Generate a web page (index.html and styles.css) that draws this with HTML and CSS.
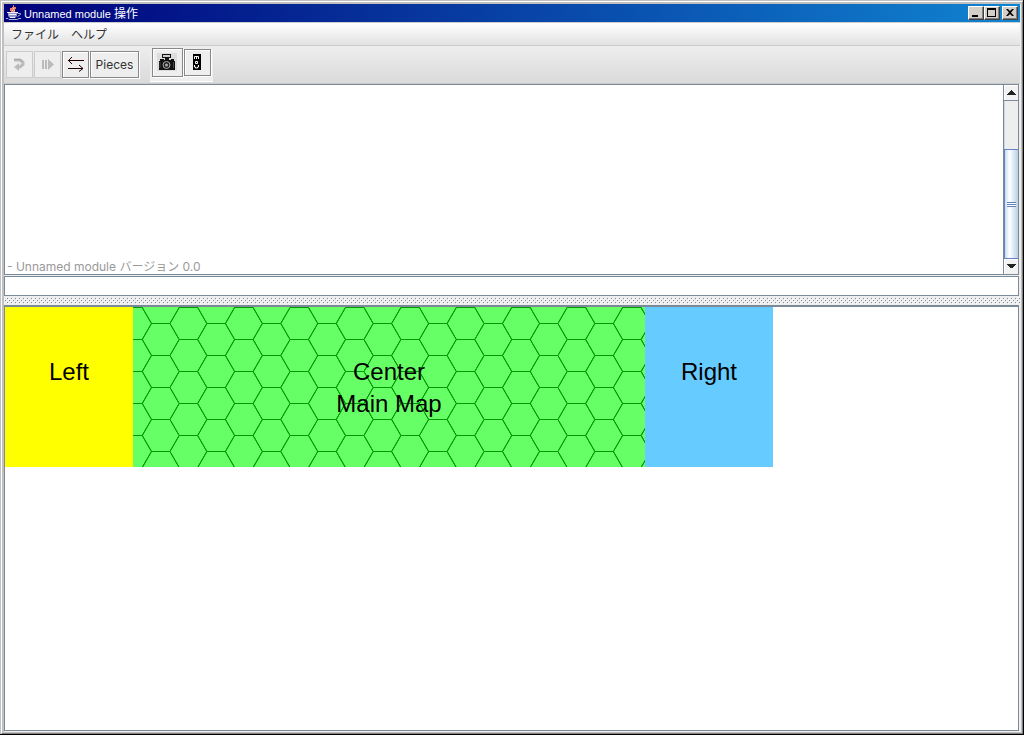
FILE: index.html
```
<!DOCTYPE html>
<html lang="ja">
<head>
<meta charset="utf-8">
<title>Unnamed module 操作</title>
<link rel="stylesheet" href="styles.css">
</head>
<body>
<div class="window">
  <header class="titlebar">
    <svg class="app-icon" width="16" height="16" viewBox="0 0 16 16" aria-hidden="true">
      <path d="M7 0h1v2h2v2H9v3H5V6H4V3h2V2h1z" fill="#f08060"/>
      <path d="M7 3h1v1H7zM6 5h1v1H6zM8 5h1v1H8z" fill="#ffd8c8"/>
      <path d="M2 7h9v4l-2 2H4l-2-2z" fill="#8f96cc"/>
      <path d="M1 7h11v1H1zM3 9h7v1H3zM4 12h5v1H4z" fill="#eef"/>
      <path d="M11.500 8.500h3v1l-3 2M0 13.500h2l1 1h8l2-1h2" fill="none" stroke="#a8aedc"/>
    </svg>
    <h1 class="title">Unnamed module <span class="jp">操作</span></h1>
    <div class="caption-buttons">
      <button class="caption" aria-label="Minimize"><svg width="14" height="12"><path d="M3 8h6v2H3z"/></svg></button>
      <button class="caption" aria-label="Maximize"><svg width="14" height="12"><path d="M2 1h9v9H2zM3 3v6h7V3z" fill-rule="evenodd"/></svg></button>
      <button class="caption close" aria-label="Close"><svg width="14" height="12"><path d="M3 2h2l2 2 2-2h2L8 5.500 11 9H9L7 7 5 9H3l3-3.500z"/></svg></button>
    </div>
  </header>
  <nav class="menubar">
    <button class="menu">ファイル</button>
    <button class="menu">ヘルプ</button>
  </nav>
  <div class="toolbar">
    <button class="tool off" disabled aria-label="Undo"><svg width="15" height="15" viewBox="0 0 15 15"><path d="M2 3h6l3 2.500v2L8 10H6" fill="none" stroke="#bbb" stroke-width="3"/><path d="M7 6v8l-5-4z" fill="#bbb"/><path d="M2 2.500h6l3 2" fill="none" stroke="#a8a8a8"/></svg></button>
    <button class="tool off" disabled aria-label="Step"><svg width="15" height="15" viewBox="0 0 15 15"><path d="M2 3h2v9H2zM5 3h2v9H5zM8 2l6 5.500L8 13z" fill="#bbb"/></svg></button>
    <button class="tool" aria-label="Connection"><svg width="19" height="17" viewBox="0 0 19 17"><path d="M2 4.500h16M6 1L2.500 4.500 6 8M2 12.500h15M13 9l4 3.500-4 3" fill="none" stroke="#200000"/></svg></button>
    <button class="tool wide">Pieces</button>
    <div class="subbar">
      <button class="tool camera" aria-label="Camera"><svg width="21" height="19" viewBox="0 0 21 19"><path d="M0 0h20v18H0z" fill="#dcdcdc"/><path d="M5 1h9v4H5zM8 4h4v3H8zM3 6h4v1h7V6h3v2h1v9H2V8h1z" fill="#111"/><path d="M6 2h7v2H6z" fill="#ccc"/><circle cx="9.500" cy="12" r="3.500" fill="#222" stroke="#aaa"/><circle cx="9.500" cy="12" r="1.500" fill="#aaa"/><path d="M3 9v6M16.500 9v6" stroke="#444"/></svg></button>
      <button class="tool" aria-label="mov"><svg width="9" height="17" viewBox="0 0 9 17"><path d="M0 0h8v16H0z"/><path d="M1.500 5V2.500h4V5M3.500 2.500V5M2.500 7.500h2v2h-2zM1.500 11v2h1v1h2v-1h1v-2" fill="none" stroke="#fff"/></svg></button>
    </div>
  </div>
  <main class="content">
    <section class="log">
      <div class="log-text">- Unnamed module <span class="jp">バージョン</span> 0.0</div>
      <div class="scrollbar">
        <button class="arrow" aria-label="Up"><svg width="9" height="5" shape-rendering="crispEdges"><path d="M4 0h1v1h1v1h1v1h1v1h1v1H0V4h1V3h1V2h1V1h1z" fill="#222"/></svg></button>
        <div class="track"><div class="thumb"></div></div>
        <button class="arrow down" aria-label="Down"><svg width="9" height="5" shape-rendering="crispEdges"><path d="M0 0h9v1H8v1H7v1H6v1H3V3H2V2H1V1H0z" fill="#222"/></svg></button>
      </div>
    </section>
    <input class="command" type="text" aria-label="Chat">
    <svg class="divider" width="100%" height="9" aria-hidden="true">
      <defs><pattern id="bumps" width="4" height="4" patternUnits="userSpaceOnUse"><path d="M3 2h1v1H3zM1 0h1v1H1z" fill="#7a8a99"/><path d="M0 3h1v1H0zM2 1h1v1H2z" fill="#fff"/></pattern></defs>
      <rect y="2" width="100%" height="6" fill="url(#bumps)"/>
    </svg>
    <section class="map">
      <div class="board left"><p class="label">Left</p></div>
      <div class="board center">
        <svg class="hexes" width="512" height="160" viewBox="0 0 512 160" aria-hidden="true"><path id="hexgrid" fill="none" stroke="#009900"/></svg>
        <p class="label">Center<br>Main Map</p>
      </div>
      <div class="board right"><p class="label">Right</p></div>
    </section>
  </main>
</div>
<script src="hexes.js"></script>
</body>
</html>
```
FILE: styles.css
```
* { box-sizing: border-box; }
body { margin: 0; font: 12px/16px Inter, "Noto Sans CJK JP", sans-serif; color: #333; }
button { font: inherit; color: inherit; padding: 0; margin: 0; border: 0; background: none; border-radius: 0; display: flex; align-items: center; justify-content: center; }
svg { display: block; flex: none; }
.window {
  height: 100vh; display: flex; flex-direction: column; background: #eee;
  border: solid #c0c0c0; border-width: 4px 3px 3px 4px;
  padding: 0 1px 1px 0;
  position: relative;
}
.window::before { content: ""; position: absolute; inset: -3px -2px -2px -3px; border: solid; border-width: 1px; border-color: #fff #808080 #808080 #fff; pointer-events: none; }
.window::after { content: ""; position: absolute; inset: -4px -3px -3px -4px; border: solid #000; border-width: 0 1px 1px 0; pointer-events: none; }
.jp { font-family: "Noto Sans CJK JP", sans-serif; font-size: 12px; }
.titlebar { flex: none; height: 18px; display: flex; align-items: center; gap: 2px; padding: 0 2px; background: linear-gradient(90deg, #00007b, #1084d0); color: #fff; }
.title { margin: 0; flex: 1; font: 11px/18px "Liberation Sans", sans-serif; white-space: nowrap; }
.caption-buttons { display: flex; }
.caption { width: 16px; height: 14px; background: #d4d0c8; border: 1px solid; border-color: #fff #404040 #404040 #fff; box-shadow: inset -1px -1px #808080; }
.caption.close { margin-left: 2px; }
.menubar { flex: none; height: 24px; display: flex; gap: 12px; padding: 0 7px; background: linear-gradient(#fff, #e2e2e2); border: solid #ccc; border-width: 1px 0; }
.menu { font-family: "Noto Sans CJK JP", sans-serif; font-size: 12px; line-height: 20px; }
.toolbar { flex: none; height: 38px; display: flex; align-items: center; gap: 1px; padding: 0 2px; background: linear-gradient(#eee, #dadada); border-bottom: 1px solid #ccc; }
.tool { width: 27px; height: 27px; background: #eee; border: 1px solid #888; box-shadow: inset 1px 1px #fff, 1px 1px #fff; }
.tool.off { border-color: #ccc; box-shadow: none; }
.tool.wide { width: 49px; }
.tool.camera { width: 31px; height: 29px; }
.subbar { display: flex; align-items: center; gap: 1px; margin-left: 10px; padding: 1px 2px 4px; height: 34px; background: #eee; border-bottom: 1px solid #fff; }
.content { flex: 1; min-height: 0; display: flex; flex-direction: column; }
.log { flex: none; height: 191px; display: flex; background: #fff; border: 1px solid #7a8a99; }
.log, .command, .map { margin-right: 1px; }
.log-text { flex: 1; align-self: flex-end; padding: 0 2px; line-height: 14px; color: #999; white-space: nowrap; }
.scrollbar { width: 15px; display: flex; flex-direction: column; border-left: 1px solid #7a8a99; background: #eee; }
.arrow { height: 16px; border-bottom: 1px solid #7a8a99; background: #f2f2f2; box-shadow: inset 1px 1px #fff; }
.arrow.down { height: 15px; border: 0; }
.track { flex: 1; display: flex; flex-direction: column; justify-content: flex-end; border-left: 1px solid #c4d8ea; }
.thumb { height: 110px; margin-left: -1px; border: 1px solid #6382bf; border-right: 0; background: repeating-linear-gradient(#6382bf 0 1px, #fff 1px 2px) center / 9px 5px no-repeat, linear-gradient(90deg, #c8ddf2, #fff 35%, #b8cfe5); }
.command { flex: none; align-self: stretch; height: 20px; margin-top: 1px; padding: 0 3px; border: 1px solid #7a8a99; border-radius: 0; background: #fff; font: inherit; outline: 0; }
.divider { background: #eee; }
.map { flex: 1; min-height: 0; display: flex; align-items: flex-start; background: #fff; border: 1px solid #7a8a99; border-top-width: 2px; overflow: hidden; }
.board { flex: none; width: 128px; height: 160px; padding-top: 49px; position: relative; }
.left { background: #ff0; }
.center { width: 512px; background: #6f6; }
.right { background: #6cf; }
.hexes { position: absolute; inset: 0; }
.label { margin: 0; position: relative; text-align: center; font: 24px/32px "Liberation Sans", sans-serif; color: #000; }
```
FILE: hexes.js
```
// Flat-topped hexes, 32px tall; columns are spaced by 1.5 sides.
const half = 16 / Math.sqrt(3);
let d = "";
for (let col = 0; col * 3 * half < 540; col++) {
  const x = col * 3 * half;
  for (let y = col % 2 ? -15.5 : 0.5; y < 176; y += 32) {
    d += `M${x - half} ${y}H${x + half}l${half} 16l${-half} 16`;
    d += `M${x - half} ${y}l${-half} 16l${half} 16`;
  }
}
document.getElementById("hexgrid").setAttribute("d", d);
```
